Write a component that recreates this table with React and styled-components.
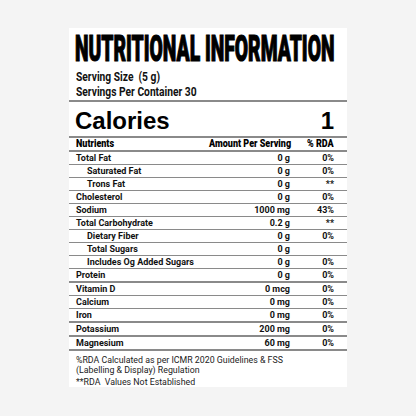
import React from "react";
import styled, { createGlobalStyle } from "styled-components";

const Global = createGlobalStyle`
  html, body { margin: 0; padding: 0; background: #f4f4f4; overflow: hidden; }
  body { font-family: Roboto, "Liberation Sans", Arial, sans-serif; color: #111; }
`;

const Page = styled.div`
  padding: 28px 69px;
`;

const Card = styled.section`
  width: 278px;
  height: 359px;
  box-sizing: border-box;
  background: #fff;
  display: flex;
  flex-direction: column;
  overflow: hidden;
`;

const Squeeze = styled.span`
  display: inline-block;
  white-space: pre;
  transform: scaleX(${(p) => p.$x});
  transform-origin: ${(p) => (p.$right ? "right" : "left")} center;
`;

const Head = styled.header`
  padding: 3px 10px 3px 6px;
  border-bottom: 2px solid #8a8a8a;
  overflow: hidden;
`;

const Title = styled.h1`
  margin: 0 0 2px;
  font-family: Roboto, sans-serif;
  font-weight: 900;
  font-size: 36px;
  line-height: 36px;
  white-space: nowrap;
  color: #000;
  -webkit-text-stroke: 1.2px #000;
`;

const Serving = styled.div`
  padding-left: 1px;
  font-family: Roboto, sans-serif;
  font-weight: 700;
  font-size: 12.5px;
  line-height: 15px;
  white-space: nowrap;
`;

const Calories = styled.div`
  display: flex;
  justify-content: space-between;
  padding: 5px 13px 1px 6px;
  font-family: "Liberation Sans", Arial, sans-serif;
  font-weight: 700;
  font-size: 24px;
  line-height: 28px;
  color: #000;
  border-bottom: 2px solid #8a8a8a;
`;

const Row = styled.div`
  display: grid;
  grid-template-columns: minmax(0, 1fr) 90px 44px;
  align-items: center;
  height: 12px;
  padding: 0 13px 0 7px;
  border-bottom: ${(p) => (p.$thick ? "2px solid #8a8a8a" : "1px solid #8a8a8a")};
  font-family: Roboto, sans-serif;
  font-weight: 700;
  font-size: 9px;
  line-height: 12px;
  white-space: nowrap;
`;

const HeadRow = styled(Row)`
  font-weight: 900;
  font-size: 10px;
  color: #000;
`;

const Name = styled.span`
  padding-left: ${(p) => (p.$indent ? "11px" : "0")};
`;

const Num = styled.span`
  text-align: right;
`;

const Footer = styled.footer`
  padding: 4px 10px 0 7px;
  font-family: Roboto, sans-serif;
  font-weight: 400;
  font-size: 8.8px;
  line-height: 10px;
  color: #222;
`;

const Note = styled.p`
  margin: 0 0 ${(p) => (p.$gap ? "2px" : "0")};
  white-space: pre;
`;

const rows = [
  { name: "Total Fat", amt: "0 g", rda: "0%" },
  { name: "Saturated Fat", amt: "0 g", rda: "0%", indent: true },
  { name: "Trons Fat", amt: "0 g", rda: "**", indent: true },
  { name: "Cholesterol", amt: "0 g", rda: "0%" },
  { name: "Sodium", amt: "1000 mg", rda: "43%" },
  { name: "Total Carbohydrate", amt: "0.2 g", rda: "**" },
  { name: "Dietary Fiber", amt: "0 g", rda: "0%", indent: true },
  { name: "Total Sugars", amt: "0 g", rda: "", indent: true },
  { name: "Includes Og Added Sugars", amt: "0 g", rda: "0%", indent: true },
  { name: "Protein", amt: "0 g", rda: "0%", thick: true },
  { name: "Vitamin D", amt: "0 mcg", rda: "0%" },
  { name: "Calcium", amt: "0 mg", rda: "0%" },
  { name: "Iron", amt: "0 mg", rda: "0%", thick: true },
  { name: "Potassium", amt: "200 mg", rda: "0%", thick: true },
  { name: "Magnesium", amt: "60 mg", rda: "0%", thick: true },
];

export default function App() {
  return (
    <Page>
      <Global />
      <Card>
        <Head>
          <Title>
            <Squeeze $x={0.535}>NUTRITIONAL INFORMATION</Squeeze>
          </Title>
          <Serving>
            <Squeeze $x={0.82}>Serving Size  (5 g)</Squeeze>
          </Serving>
          <Serving>
            <Squeeze $x={0.82}>Servings Per Container 30</Squeeze>
          </Serving>
        </Head>
        <Calories>
          <span>Calories</span>
          <span>1</span>
        </Calories>
        <HeadRow $thick>
          <Name>
            <Squeeze $x={0.9}>Nutrients</Squeeze>
          </Name>
          <Num>
            <Squeeze $x={0.9} $right>Amount Per Serving</Squeeze>
          </Num>
          <Num>
            <Squeeze $x={0.9} $right>% RDA</Squeeze>
          </Num>
        </HeadRow>
        {rows.map((r) => (
          <Row key={r.name} $thick={r.thick}>
            <Name $indent={r.indent}>{r.name}</Name>
            <Num>{r.amt}</Num>
            <Num>{r.rda}</Num>
          </Row>
        ))}
        <Footer>
          <Note>%RDA Calculated as per ICMR 2020 Guidelines &amp; FSS</Note>
          <Note $gap>(Labelling &amp; Display) Regulation</Note>
          <Note>**RDA  Values Not Established</Note>
        </Footer>
      </Card>
    </Page>
  );
}
